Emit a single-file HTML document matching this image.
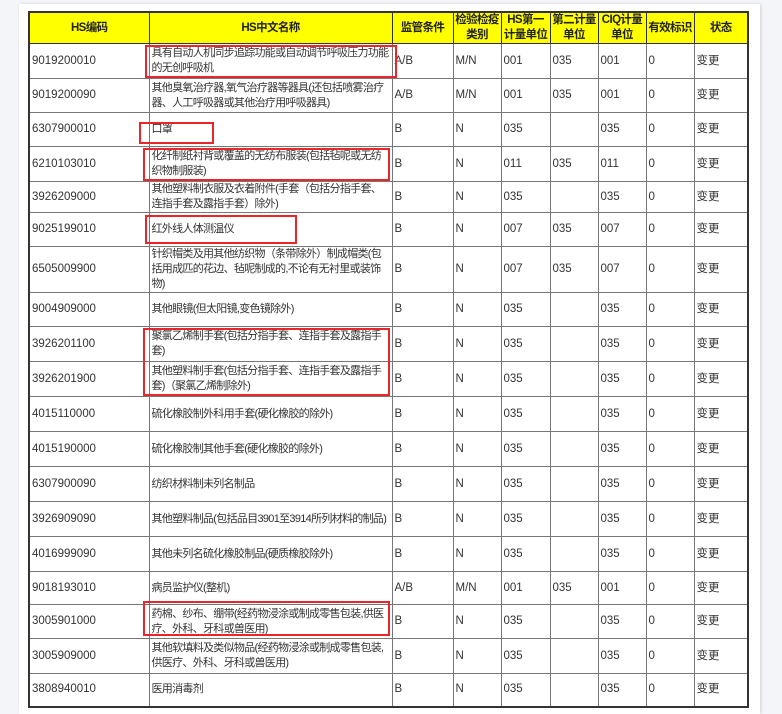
<!DOCTYPE html>
<html><head><meta charset="utf-8"><style>
html,body{margin:0;padding:0}
body{width:782px;height:706px;background:#f4f5f9;position:relative;overflow:hidden;font-family:"Liberation Sans","Noto Sans CJK SC",sans-serif;}
.page{position:absolute;left:19px;top:4px;width:741px;height:710px;background:#fff;box-shadow:1px 0 3px rgba(0,0,0,0.15);}
table{position:absolute;left:28px;top:11px;border-collapse:collapse;table-layout:fixed;border:2px solid #333;}
td,th{border:1px solid #777;font-size:11px;line-height:15px;color:#333;padding:0 1px 0 2px;vertical-align:middle;text-align:left;overflow:hidden;letter-spacing:-0.7px;}
td:first-child,td:nth-child(n+3){letter-spacing:0;font-size:11.5px}
th{background:#ffff00;color:#222;font-weight:bold;text-align:center;line-height:15px;padding:0;border-color:#333;white-space:nowrap;letter-spacing:-0.6px;font-size:11.5px}
.r{position:absolute;border:2px solid #e8262b;box-sizing:border-box;}
</style></head><body>
<div class="page"></div>
<table>
<colgroup><col style="width:120px"><col style="width:243px"><col style="width:61px"><col style="width:48px"><col style="width:49px"><col style="width:48px"><col style="width:48px"><col style="width:48px"><col style="width:54px"></colgroup>
<tr style="height:31px"><th>HS编码</th><th>HS中文名称</th><th>监管条件</th><th>检验检疫<br>类别</th><th>HS第一<br>计量单位</th><th>第二计量<br>单位</th><th>CIQ计量<br>单位</th><th>有效标识</th><th>状态</th></tr>
<tr style="height:35px"><td>9019200010</td><td>具有自动人机同步追踪功能或自动调节呼吸压力功能的无创呼吸机</td><td>A/B</td><td>M/N</td><td>001</td><td>035</td><td>001</td><td>0</td><td>变更</td></tr>
<tr style="height:34px"><td>9019200090</td><td>其他臭氧治疗器,氧气治疗器等器具(还包括喷雾治疗器、人工呼吸器或其他治疗用呼吸器具)</td><td>A/B</td><td>M/N</td><td>001</td><td>035</td><td>001</td><td>0</td><td>变更</td></tr>
<tr style="height:34px"><td>6307900010</td><td>口罩</td><td>B</td><td>N</td><td>035</td><td></td><td>035</td><td>0</td><td>变更</td></tr>
<tr style="height:35px"><td>6210103010</td><td>化纤制纸衬背或覆盖的无纺布服装(包括毡呢或无纺织物制服装)</td><td>B</td><td>N</td><td>011</td><td>035</td><td>011</td><td>0</td><td>变更</td></tr>
<tr style="height:31px"><td>3926209000</td><td>其他塑料制衣服及衣着附件(手套（包括分指手套、连指手套及露指手套）除外)</td><td>B</td><td>N</td><td>035</td><td></td><td>035</td><td>0</td><td>变更</td></tr>
<tr style="height:34px"><td>9025199010</td><td>红外线人体测温仪</td><td>B</td><td>N</td><td>007</td><td>035</td><td>007</td><td>0</td><td>变更</td></tr>
<tr style="height:45px"><td>6505009900</td><td>针织帽类及用其他纺织物（条带除外）制成帽类(包括用成匹的花边、毡呢制成的,不论有无衬里或装饰物)</td><td>B</td><td>N</td><td>007</td><td>035</td><td>007</td><td>0</td><td>变更</td></tr>
<tr style="height:34px"><td>9004909000</td><td>其他眼镜(但太阳镜,变色镜除外)</td><td>B</td><td>N</td><td>035</td><td></td><td>035</td><td>0</td><td>变更</td></tr>
<tr style="height:35px"><td>3926201100</td><td>聚氯乙烯制手套(包括分指手套、连指手套及露指手套)</td><td>B</td><td>N</td><td>035</td><td></td><td>035</td><td>0</td><td>变更</td></tr>
<tr style="height:35px"><td>3926201900</td><td>其他塑料制手套(包括分指手套、连指手套及露指手套)（聚氯乙烯制除外)</td><td>B</td><td>N</td><td>035</td><td></td><td>035</td><td>0</td><td>变更</td></tr>
<tr style="height:35px"><td>4015110000</td><td>硫化橡胶制外科用手套(硬化橡胶的除外)</td><td>B</td><td>N</td><td>035</td><td></td><td>035</td><td>0</td><td>变更</td></tr>
<tr style="height:35px"><td>4015190000</td><td>硫化橡胶制其他手套(硬化橡胶的除外)</td><td>B</td><td>N</td><td>035</td><td></td><td>035</td><td>0</td><td>变更</td></tr>
<tr style="height:35px"><td>6307900090</td><td>纺织材料制未列名制品</td><td>B</td><td>N</td><td>035</td><td></td><td>035</td><td>0</td><td>变更</td></tr>
<tr style="height:35px"><td>3926909090</td><td>其他塑料制品(包括品目3901至3914所列材料的制品)</td><td>B</td><td>N</td><td>035</td><td></td><td>035</td><td>0</td><td>变更</td></tr>
<tr style="height:35px"><td>4016999090</td><td>其他未列名硫化橡胶制品(硬质橡胶除外)</td><td>B</td><td>N</td><td>035</td><td></td><td>035</td><td>0</td><td>变更</td></tr>
<tr style="height:33px"><td>9018193010</td><td>病员监护仪(整机)</td><td>A/B</td><td>M/N</td><td>001</td><td>035</td><td>001</td><td>0</td><td>变更</td></tr>
<tr style="height:34px"><td>3005901000</td><td>药棉、纱布、绷带(经药物浸涂或制成零售包装,供医疗、外科、牙科或兽医用)</td><td>B</td><td>N</td><td>035</td><td></td><td>035</td><td>0</td><td>变更</td></tr>
<tr style="height:35px"><td>3005909000</td><td>其他软填料及类似物品(经药物浸涂或制成零售包装,供医疗、外科、牙科或兽医用)</td><td>B</td><td>N</td><td>035</td><td></td><td>035</td><td>0</td><td>变更</td></tr>
<tr style="height:33px"><td>3808940010</td><td>医用消毒剂</td><td>B</td><td>N</td><td>035</td><td></td><td>035</td><td>0</td><td>变更</td></tr>
</table>
<div class="r" style="left:145px;top:45px;width:252px;height:33px"></div>
<div class="r" style="left:139px;top:122px;width:75px;height:22px"></div>
<div class="r" style="left:143px;top:148px;width:247px;height:33px"></div>
<div class="r" style="left:145px;top:215px;width:152px;height:29px"></div>
<div class="r" style="left:143px;top:328px;width:247px;height:68px"></div>
<div class="r" style="left:143px;top:601px;width:247px;height:35px"></div>
</body></html>
